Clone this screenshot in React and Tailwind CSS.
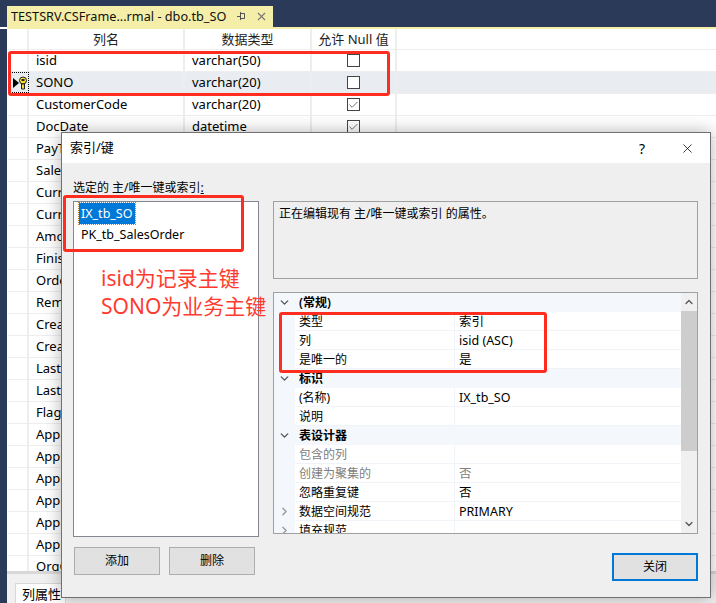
import React from 'react';
import { ChevronDown, ChevronRight, ChevronUp, Check, X } from 'lucide-react';

const FONT = "font-['Noto_Sans','Noto_Sans_CJK_SC',sans-serif]";

const columns = [
  { name: 'isid', type: 'varchar(50)', nullable: false },
  { name: 'SONO', type: 'varchar(20)', nullable: false, active: true },
  { name: 'CustomerCode', type: 'varchar(20)', nullable: true },
  { name: 'DocDate', type: 'datetime', nullable: true },
  { name: 'PayType' },
  { name: 'SalesMan' },
  { name: 'Currency' },
  { name: 'CurrencyRate' },
  { name: 'Amount' },
  { name: 'Finished' },
  { name: 'OrderType' },
  { name: 'Remark' },
  { name: 'CreateBy' },
  { name: 'CreateDate' },
  { name: 'LastUpdateBy' },
  { name: 'LastUpdateDate' },
  { name: 'Flag' },
  { name: 'Approve1' },
  { name: 'Approve2' },
  { name: 'Approve3' },
  { name: 'Approve4' },
  { name: 'Approve5' },
  { name: 'Approve6' },
  { name: 'OrgCode' },
];

const props = [
  { section: true, label: '(常规)', bold: true },
  { label: '类型', value: '索引' },
  { label: '列', value: 'isid (ASC)' },
  { label: '是唯一的', value: '是' },
  { section: true, label: '标识' },
  { label: '(名称)', value: 'IX_tb_SO' },
  { label: '说明', value: '' },
  { section: true, label: '表设计器' },
  { label: '包含的列', value: '', muted: true },
  { label: '创建为聚集的', value: '否', muted: true },
  { label: '忽略重复键', value: '否' },
  { label: '数据空间规范', value: 'PRIMARY', expand: true },
  { label: '填充规范', value: '', expand: true },
];

const KeyIcon = () => (
  <svg width="18" height="14" viewBox="0 0 18 14">
    <path d="M3 2l6 5-6 5z" fill="#000" />
    <circle cx="13" cy="4.5" r="3.5" fill="#f7d733" stroke="#222" />
    <rect x="11.5" y="3" width="3" height="2" fill="#222" />
    <path d="M11.5 8h3v5h-3z" fill="#f7d733" stroke="#222" />
  </svg>
);

const PinIcon = () => (
  <svg width="11" height="11" viewBox="0 0 11 11" fill="none" stroke="#555">
    <path d="M4.5 2.5h4v5h-4zM4.5 5.5H1M4.5 1v8" />
  </svg>
);

const GridRow = ({ col }) => (
  <div className={`flex h-[22px] shrink-0 border-b border-[#eeeeee] ${col.active ? 'bg-[#e9edf1]' : ''}`}>
    <div className={`w-[21px] flex items-center justify-center ${col.active ? 'border border-dotted border-black' : 'border-r-2 border-[#eeeeee]'}`}>
      {col.active && <KeyIcon />}
    </div>
    <div className="w-[156px] pl-[7px] leading-[21px] border-r-2 border-[#eeeeee] whitespace-nowrap">{col.name}</div>
    <div className="w-[127px] pl-[7px] leading-[21px] border-r-2 border-[#eeeeee]">{col.type}</div>
    <div className="w-[85px] flex items-center justify-center border-r-2 border-[#eeeeee]">
      {col.type && (
        <span className="w-[13px] h-[13px] border border-[#444444] bg-white flex items-center justify-center">
          {col.nullable && <Check size={12} strokeWidth={1.8} className="text-[#555555]" />}
        </span>
      )}
    </div>
  </div>
);

const PropRow = ({ row }) => (
  <div className={`flex h-[19px] shrink-0 leading-[20px] ${row.section ? 'bg-[#f4f7fc]' : ''}`}>
    <div className="w-[21px] shrink-0 bg-[#f4f7fc] flex items-center justify-center">
      {row.section && <ChevronDown size={13} strokeWidth={2.5} className="text-[#555555]" />}
      {row.expand && <ChevronRight size={13} strokeWidth={2.5} className="text-[#999999]" />}
    </div>
    {row.section ? (
      <div className="pl-[4px] font-semibold">{row.label}</div>
    ) : (
      <>
        <div className={`w-[160px] shrink-0 pl-[4px] border-b border-r border-[#f0f3f8] ${row.muted ? 'text-[#808080]' : ''}`}>{row.label}</div>
        <div className={`flex-1 pl-[4px] text-[12.5px] border-b border-[#f0f3f8] ${row.muted ? 'text-[#808080]' : ''}`}>{row.value}</div>
      </>
    )}
  </div>
);

const DlgButton = ({ children, primary }) => (
  <button className={`w-[86px] h-[28px] bg-[#e1e1e1] text-[12px] ${primary ? 'border-2 border-[#0078d7]' : 'border border-[#adadad]'}`}>
    {children}
  </button>
);

export default function App() {
  return (
    <div className={`relative w-[716px] h-[603px] overflow-hidden flex flex-col bg-white text-black text-[13px] ${FONT}`}>
      {/* Tab bar */}
      <div className="h-[27px] shrink-0 bg-[#2b3a58] pl-[7px] pt-[6px]">
        <div className="w-[266px] h-[21px] bg-[#f5eea8] flex items-center pl-[4px] gap-[10px] text-[#111111] text-[12.7px] leading-none">
          <span className="whitespace-nowrap">TESTSRV.CSFrame...rmal - dbo.tb_SO</span>
          <PinIcon />
          <X size={13} className="text-[#777777] -ml-[2px]" />
        </div>
      </div>
      <div className="h-[2px] shrink-0 ml-[7px] bg-[#f5eea8]" />

      <div className="flex-1 flex min-h-0">
        <div className="w-[7px] bg-[#2b3a58] shrink-0" />
        <div className="flex-1 flex flex-col min-h-0">
          {/* Column grid */}
          <div className="h-[542px] shrink-0 overflow-hidden pl-[1px]">
            <div className="flex h-[21px] border-b border-[#eeeeee] text-center leading-[21px] text-[#222222]">
              <div className="w-[21px] border-r-2 border-[#eeeeee]" />
              <div className="w-[156px] border-r-2 border-[#eeeeee]">列名</div>
              <div className="w-[127px] border-r-2 border-[#eeeeee]">数据类型</div>
              <div className="w-[85px] border-r-2 border-[#eeeeee] whitespace-nowrap">允许 Null 值</div>
            </div>
            {columns.map((col) => (
              <GridRow key={col.name} col={col} />
            ))}
          </div>
          {/* Bottom tabs */}
          <div className="flex-1 bg-[#f0f0f0] border-t-[3px] border-[#d8d8d8] pl-[8px] pt-[9px]">
            <div className="w-[51px] h-[30px] bg-white border border-[#d8d8d8] pl-[6px] leading-[21px]">列属性</div>
          </div>
        </div>
      </div>

      {/* Dialog */}
      <div className="absolute left-[61px] top-[132px] w-[650px] h-[466px] flex flex-col bg-[#efefef] border border-[#707070] shadow-[0_0_16px_rgba(0,0,0,0.3)] text-[12px]">
        <div className="h-[30px] shrink-0 bg-white flex items-center pl-[8px] pr-[15px]">
          <span className="text-[13px]">索引/键</span>
          <span className="ml-auto text-[14px] mr-[35px]">?</span>
          <X size={15} strokeWidth={1.2} />
        </div>
        <div className="flex-1 flex flex-col pl-[11px] pr-[12px] min-h-0">
          <div className="h-[38px] pt-[16px] leading-[18px] shrink-0">
            选定的 主/唯一键或索引<span className="underline">:</span>
          </div>
          <div className="flex gap-[14px]">
            {/* Index list */}
            <div className="w-[186px] shrink-0 flex flex-col">
              <div className="h-[336px] bg-white border border-[#828790] pl-[5px] pt-[1px] text-[12.5px] leading-[21px]">
                <div className="w-fit px-[2px] h-[21px] bg-[#0078d7] text-white outline-1 outline-dotted outline-[#c08030]">IX_tb_SO</div>
                <div className="px-[2px]">PK_tb_SalesOrder</div>
              </div>
              <div className="flex gap-[9px] pl-[1px] pt-[10px]">
                <DlgButton>添加</DlgButton>
                <DlgButton>删除</DlgButton>
              </div>
            </div>
            {/* Description + property grid */}
            <div className="flex-1 flex flex-col">
              <div className="h-[78px] border border-[#a0a0a0] pl-[5px] pt-[3px] leading-[18px] shrink-0">
                正在编辑现有 主/唯一键或索引 的属性。
              </div>
              <div className="h-[242px] mt-[13px] shrink-0 border border-[#a0a0a0] bg-white flex overflow-hidden text-[12px]">
                <div className="flex-1 flex flex-col overflow-hidden">
                  {props.map((row) => (
                    <PropRow key={row.label} row={row} />
                  ))}
                </div>
                <div className="w-[16px] shrink-0 bg-[#f0f0f0] flex flex-col items-center">
                  <ChevronUp size={12} strokeWidth={2.5} className="my-[3px] text-[#555555]" />
                  <div className="w-full h-[140px] bg-[#cdcdcd]" />
                  <ChevronDown size={12} strokeWidth={2.5} className="mt-auto mb-[3px] text-[#555555]" />
                </div>
              </div>
              <div className="flex justify-end pt-[19px]">
                <DlgButton primary>关闭</DlgButton>
              </div>
            </div>
          </div>
        </div>
      </div>

      {/* Red annotations drawn on top of the screenshot */}
      <div className="absolute left-[8px] top-[51px] w-[382px] h-[45px] border-[3px] border-[#ff2d20] rounded-[3px]" />
      <div className="absolute left-[63px] top-[195px] w-[181px] h-[57px] border-[3px] border-[#ff2d20] rounded-[3px]" />
      <div className="absolute left-[279px] top-[312px] w-[268px] h-[61px] border-[3px] border-[#ff2d20] rounded-[3px]" />
      <div className="absolute left-[101px] top-[264px] text-[21px] leading-[28px] text-[#ff3b30] whitespace-nowrap">
        <div>isid为记录主键</div>
        <div>SONO为业务主键</div>
      </div>
    </div>
  );
}
